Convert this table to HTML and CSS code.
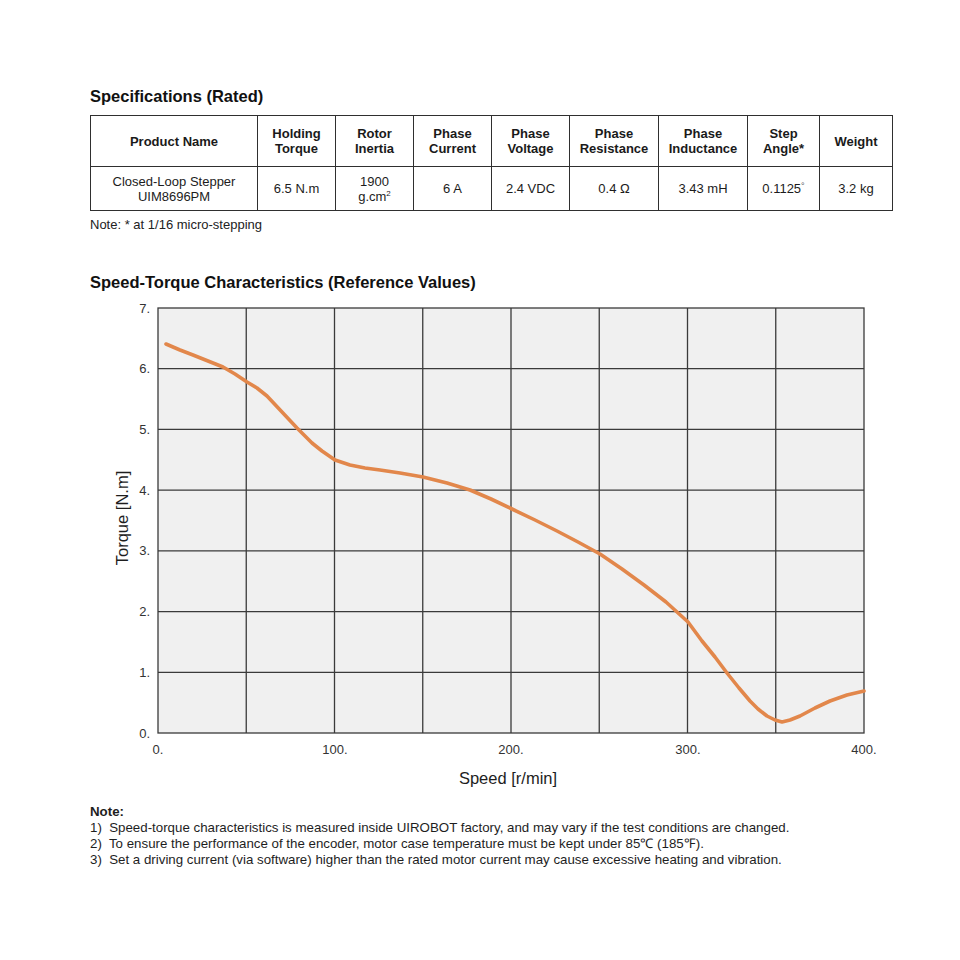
FILE: index.html
```html
<!DOCTYPE html>
<html lang="en">
<head>
<meta charset="utf-8">
<title>UIM8696PM Specifications</title>
<link rel="stylesheet" href="styles.css">
</head>
<body>
<main class="sheet">
  <h2 class="section-title">Specifications (Rated)</h2>
  <table class="spec-table">
    <colgroup>
      <col class="col-name"><col class="col-std"><col class="col-std"><col class="col-std"><col class="col-std"><col class="col-wide"><col class="col-wide"><col class="col-step"><col class="col-weight">
    </colgroup>
    <thead>
      <tr class="head-row">
        <th>Product Name</th>
        <th>Holding<br>Torque</th>
        <th>Rotor<br>Inertia</th>
        <th>Phase<br>Current</th>
        <th>Phase<br>Voltage</th>
        <th>Phase<br>Resistance</th>
        <th>Phase<br>Inductance</th>
        <th>Step<br>Angle*</th>
        <th>Weight</th>
      </tr>
    </thead>
    <tbody>
      <tr class="body-row">
        <td>Closed-Loop Stepper<br>UIM8696PM</td>
        <td>6.5 N.m</td>
        <td>1900<br>g.cm<sup class="sup">2</sup></td>
        <td>6 A</td>
        <td>2.4 VDC</td>
        <td>0.4 Ω</td>
        <td>3.43 mH</td>
        <td>0.1125<sup class="deg">°</sup></td>
        <td>3.2 kg</td>
      </tr>
    </tbody>
  </table>
  <p class="table-note">Note: * at 1/16 micro-stepping</p>

  <h2 class="section-title chart-title">Speed-Torque Characteristics (Reference Values)</h2>
  <svg class="chart" width="800" height="500" viewBox="90 290 800 500" xmlns="http://www.w3.org/2000/svg">
    <rect x="158" y="307" width="706" height="425" fill="#f0f0f0"/>
    <g stroke="#3a3a3a" stroke-width="1.3" fill="none">
      <line x1="246.25" y1="307" x2="246.25" y2="732"/>
      <line x1="334.5" y1="307" x2="334.5" y2="732"/>
      <line x1="422.75" y1="307" x2="422.75" y2="732"/>
      <line x1="511" y1="307" x2="511" y2="732"/>
      <line x1="599.25" y1="307" x2="599.25" y2="732"/>
      <line x1="687.5" y1="307" x2="687.5" y2="732"/>
      <line x1="775.75" y1="307" x2="775.75" y2="732"/>
      <line x1="158" y1="367.7" x2="864" y2="367.7"/>
      <line x1="158" y1="428.4" x2="864" y2="428.4"/>
      <line x1="158" y1="489.1" x2="864" y2="489.1"/>
      <line x1="158" y1="549.9" x2="864" y2="549.9"/>
      <line x1="158" y1="610.6" x2="864" y2="610.6"/>
      <line x1="158" y1="671.3" x2="864" y2="671.3"/>
      <rect x="158" y="307" width="706" height="425"/>
    </g>
    <polyline class="curve" fill="none" stroke="#e2874b" stroke-width="3.6" stroke-linejoin="round" stroke-linecap="round"
      points="166,343 180,349 193,354 208,360 223,366 235,373 247,381 257,387 267,395 282,411 297,427 312,442 322,450 335,459 350,464 365,467 380,469 400,472 423,476 447,482 470,489 491,498 512,508 535,519 557,530 578,541 600,553 622,568 644,584 666,601 688,621 702,640 715,656 727,672 739,687 750,700 758,708 767,715 775,719 782,721 790,719 800,715 815,707 830,700 847,694 864,690"/>
    <g class="tick-y" text-anchor="end">
      <text x="150" y="311.5">7.</text>
      <text x="150" y="372.2">6.</text>
      <text x="150" y="432.9">5.</text>
      <text x="150" y="493.6">4.</text>
      <text x="150" y="554.4">3.</text>
      <text x="150" y="615.1">2.</text>
      <text x="150" y="675.8">1.</text>
      <text x="150" y="736.5">0.</text>
    </g>
    <g class="tick-x" text-anchor="middle">
      <text x="158" y="752.5">0.</text>
      <text x="335" y="752.5">100.</text>
      <text x="511" y="752.5">200.</text>
      <text x="688" y="752.5">300.</text>
      <text x="864" y="752.5">400.</text>
    </g>
    <text class="axis-title" x="508" y="783" text-anchor="middle">Speed [r/min]</text>
    <text class="axis-title" x="128" y="517" text-anchor="middle" transform="rotate(-90 128 517)">Torque [N.m]</text>
  </svg>

  <section class="notes">
    <p class="notes-head">Note:</p>
    <p>1)&nbsp; Speed-torque characteristics is measured inside UIROBOT factory, and may vary if the test conditions are changed.</p>
    <p>2)&nbsp; To ensure the performance of the encoder, motor case temperature must be kept under 85℃ (185℉).</p>
    <p>3)&nbsp; Set a driving current (via software) higher than the rated motor current may cause excessive heating and vibration.</p>
  </section>
</main>
</body>
</html>
```

FILE: styles.css
```css
html, body {
  margin: 0;
  padding: 0;
  background: #ffffff;
}

body {
  font-family: "Liberation Sans", Arial, sans-serif;
  color: #1c1c1c;
}

.sheet {
  width: 803px;
  padding: 87px 0 0 90px;
}

.section-title {
  margin: 0 0 10px 0;
  font-size: 16.5px;
  line-height: 18px;
  font-weight: bold;
  color: #111111;
}

.spec-table {
  width: 803px;
  table-layout: fixed;
  border-collapse: collapse;
  font-size: 13px;
  line-height: 15px;
  text-align: center;
}

.col-name { width: 167px; }
.col-std { width: 78px; }
.col-wide { width: 89px; }
.col-step { width: 72px; }
.col-weight { width: 73px; }

.spec-table th,
.spec-table td {
  border: 1.5px solid #2f2f2f;
  padding: 0;
  vertical-align: middle;
}

.spec-table th {
  font-weight: bold;
  color: #1a1a1a;
}

.head-row th { height: 50px; }
.body-row td { height: 43px; }

.sup {
  font-size: 8px;
  vertical-align: 5px;
  line-height: 0;
}

.deg {
  font-size: 9px;
  vertical-align: 4px;
  line-height: 0;
  color: #555555;
}

.table-note {
  margin: 6px 0 0 0;
  font-size: 13px;
  line-height: 16px;
  color: #222222;
}

.chart-title {
  margin: 40px 0 0 0;
}

.chart {
  display: block;
  margin: 0 0 0 -90px;
  position: relative;
  left: 90px;
}

.tick-y text,
.tick-x text {
  font-family: "Liberation Sans", Arial, sans-serif;
  font-size: 13px;
  fill: #333333;
}

.axis-title {
  font-family: "Liberation Sans", Arial, sans-serif;
  font-size: 16.5px;
  fill: #1e1e1e;
}

.notes {
  margin-top: 13px;
  font-family: "Liberation Sans", Arial, sans-serif;
  font-size: 13.3px;
  line-height: 16px;
  color: #1e1e1e;
}

.notes p {
  margin: 0;
  white-space: nowrap;
}

.notes-head {
  font-weight: bold;
}
```
